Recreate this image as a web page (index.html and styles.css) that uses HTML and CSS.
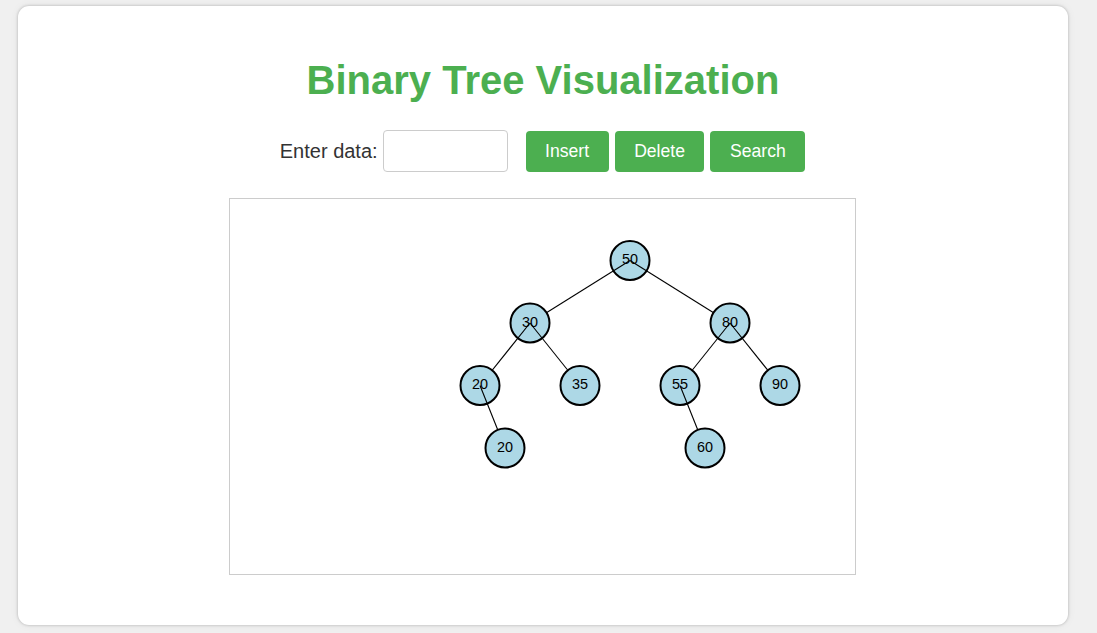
FILE: index.html
```html
<!DOCTYPE html>
<html>
<head>
<meta charset="utf-8">
<title>Binary Tree Visualization</title>
<link rel="stylesheet" href="styles.css">
</head>
<body>
<div class="container">
  <h1 class="title">Binary Tree Visualization</h1>
  <div class="controls">
    <label class="label" for="data">Enter data:</label>
    <input class="input" id="data" type="text">
    <div class="buttons">
      <button class="btn">Insert</button>
      <button class="btn">Delete</button>
      <button class="btn">Search</button>
    </div>
  </div>
  <div class="canvas">
    <svg class="tree" width="625" height="375" viewBox="0 0 625 375">
      <g class="node"><circle cx="400" cy="61.5" r="19.5"/><text x="400" y="60">50</text></g>
      <line x1="400" y1="61.5" x2="300" y2="124"/>
      <line x1="400" y1="61.5" x2="500" y2="124"/>

      <g class="node"><circle cx="300" cy="124" r="19.5"/><text x="300" y="122.5">30</text></g>
      <line x1="300" y1="124" x2="250" y2="186.5"/>
      <line x1="300" y1="124" x2="350" y2="186.5"/>

      <g class="node"><circle cx="250" cy="186.5" r="19.5"/><text x="250" y="185">20</text></g>
      <line x1="250" y1="186.5" x2="275" y2="249"/>
      <g class="node"><circle cx="275" cy="249" r="19.5"/><text x="275" y="247.5">20</text></g>

      <g class="node"><circle cx="350" cy="186.5" r="19.5"/><text x="350" y="185">35</text></g>

      <g class="node"><circle cx="500" cy="124" r="19.5"/><text x="500" y="122.5">80</text></g>
      <line x1="500" y1="124" x2="450" y2="186.5"/>
      <line x1="500" y1="124" x2="550" y2="186.5"/>

      <g class="node"><circle cx="450" cy="186.5" r="19.5"/><text x="450" y="185">55</text></g>
      <line x1="450" y1="186.5" x2="475" y2="249"/>
      <g class="node"><circle cx="475" cy="249" r="19.5"/><text x="475" y="247.5">60</text></g>

      <g class="node"><circle cx="550" cy="186.5" r="19.5"/><text x="550" y="185">90</text></g>
    </svg>
  </div>
</div>
</body>
</html>
```
FILE: styles.css
```css
html, body {
  margin: 0;
  padding: 0;
}
body {
  background: #f0f0f0;
  font-family: "Liberation Sans", Arial, sans-serif;
  padding: 6px 29px 8px 18px;
}
.container {
  width: 1050px;
  height: 619px;
  box-sizing: border-box;
  background: #fff;
  border-radius: 11px;
  box-shadow: 0 0 3px rgba(0,0,0,0.25), 0 0 10px rgba(0,0,0,0.06);
  display: flex;
  flex-direction: column;
  align-items: center;
  padding-top: 51px;
}
.title {
  margin: 0;
  color: #4caf50;
  font-size: 40px;
  line-height: 46px;
  font-weight: bold;
}
.controls {
  margin-top: 27px;
  display: flex;
  align-items: center;
  height: 42px;
  margin-right: 1px;
}
.label {
  font-size: 20px;
  color: #333;
  margin-right: 5px;
}
.input {
  width: 125px;
  height: 42px;
  box-sizing: border-box;
  border: 1px solid #ccc;
  border-radius: 4px;
  padding: 0 8px;
  font-size: 17.6px;
  font-family: inherit;
  margin: 0;
}
.buttons {
  display: flex;
  gap: 6px;
  margin-left: 18px;
}
.btn {
  height: 41px;
  padding: 0 19.5px;
  background: #4caf50;
  color: #fff;
  border: none;
  border-radius: 4px;
  font-family: inherit;
  font-size: 17.6px;
  margin: 0;
}
.canvas {
  margin-top: 26px;
  margin-right: 1px;
  width: 625px;
  height: 375px;
  border: 1px solid #ccc;
  background: #fff;
}
.tree {
  display: block;
}
.tree circle {
  fill: #add8e6;
  stroke: #000;
  stroke-width: 2;
}
.tree text {
  font-family: "Liberation Sans", Arial, sans-serif;
  font-size: 14.4px;
  fill: #000;
  text-anchor: middle;
  dominant-baseline: central;
}
.tree line {
  stroke: #000;
  stroke-width: 1.1;
}
```
